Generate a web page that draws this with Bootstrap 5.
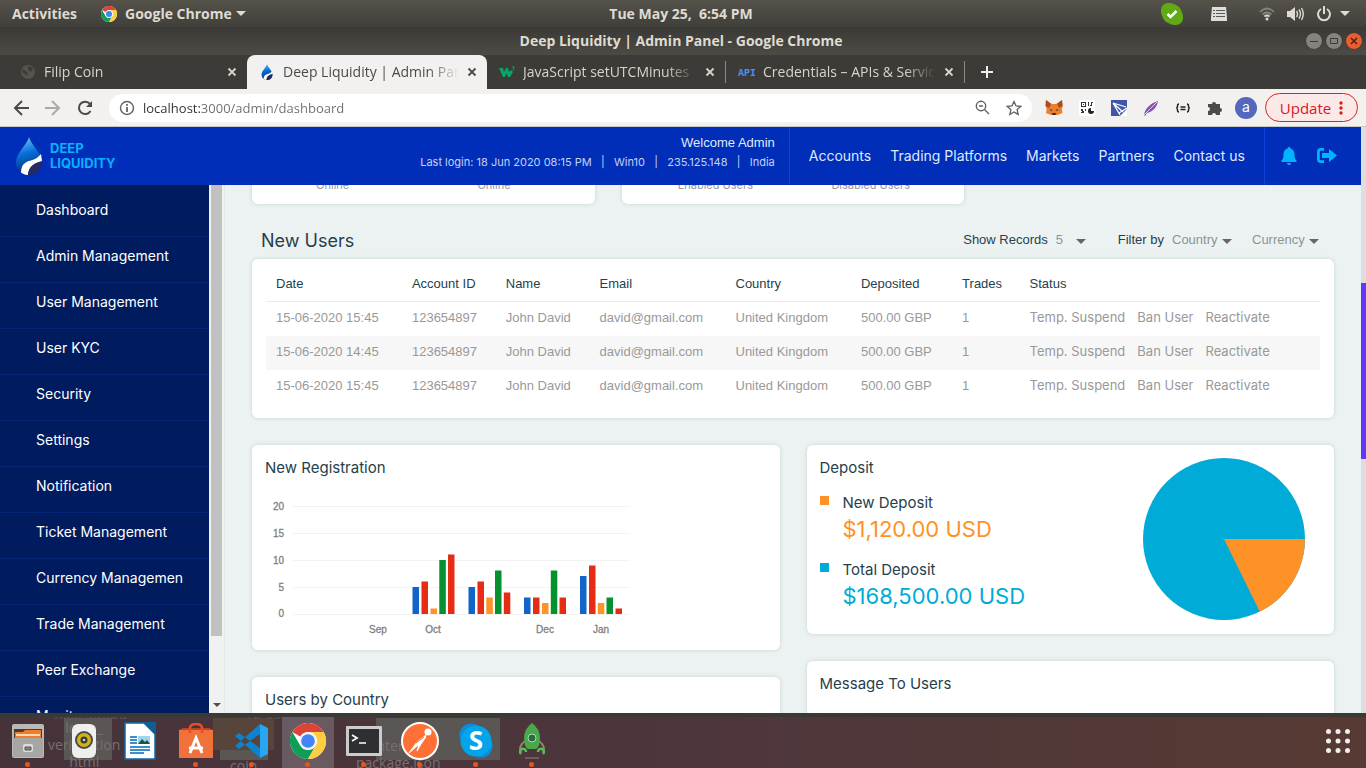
<!DOCTYPE html>
<html lang="en">
<head>
<meta charset="utf-8">
<meta name="viewport" content="width=device-width, initial-scale=1">
<title>Deep Liquidity | Admin Panel</title>
<link href="https://cdn.jsdelivr.net/npm/bootstrap@5.3.0/dist/css/bootstrap.min.css" rel="stylesheet">
<style>
:root{--ui:"Open Sans","Noto Sans",sans-serif;--geo:Inter,"Open Sans",sans-serif;--arial:"Liberation Sans",Arial,sans-serif;--ink:#263f4c}
body{height:100vh;overflow:hidden;font-family:var(--geo);font-size:14px;line-height:20px;background:#3c3b37}
button{background:none;border:0;padding:0;color:inherit;font:inherit}
a{color:inherit;text-decoration:none}
svg{display:block;flex:none}
/* system bar and window frame */
.sysbar,.frame-title,.tabstrip,.toolbar,.site{flex-shrink:0}
.sysbar{height:27px;padding:0 16px 0 12px;background:linear-gradient(#55524a,#403f3a);color:#dfdbd2;font:700 14px/27px var(--ui)}
.frame-title{height:28px;background:linear-gradient(#3a3935,#4c4b45);color:#dfdbd2;font:700 14px/27px var(--ui)}
.side{flex:1 1 0}
.winbtn{width:16px;height:16px;border-radius:50%;background:#85837d;box-shadow:0 0 1px #222}
.winbtn.quit{background:#ea5d2f}
.tabstrip{height:34px;background:#3d3b37;color:#d8d4cc;font:14px/34px var(--ui)}
.btab{flex:0 1 239px;min-width:0;padding:0 10px 0 12px;gap:8px}
.btab.cur{flex-basis:240px;background:#f2f1f0;color:#4a4a4a;border-radius:8px 8px 0 0}
.btab .cap{flex:1;overflow:hidden;white-space:nowrap;-webkit-mask-image:linear-gradient(90deg,#000 82%,transparent)}
.btab.split{border-right:1px solid #6e6c66;border-image:linear-gradient(transparent 20%,#8b8981 20% 80%,transparent 80%) 1}
.toolbar{height:38px;background:#f2f1f0;border-bottom:1px solid #c9c8c6;padding:0 8px 0 13px}
.omni{height:28px;border-radius:14px;background:#fff;padding:0 10px;margin-right:13px}
.omni input{flex:1;border:0;outline:0;min-width:0;padding:0;font:13px/20px var(--ui);color:transparent;background:linear-gradient(90deg,#303030 57px,#6d6d6d 57px);-webkit-background-clip:text;background-clip:text}
.avatar-a{width:22px;height:22px;border-radius:50%;background:#5468bd;color:#fff;line-height:20px;margin:0 8px 0 12px}
.update{width:93px;height:29px;border:1px solid #d22;border-radius:15px;background:#fce8e6;color:#d3201f;font:15px/26px var(--ui)}
/* site header */
.site{height:58px;background:#002eb9;color:#dfeaff}
.brand-name{color:#0bb0ff;font:700 13px/15px Inter,sans-serif}
.login{padding:0 14px 8px 0}
.login-info{font-size:11px;line-height:18px;color:#c3d2f4}
.welcome{font:13px/20px var(--arial)}
.site .cell{border-left:1px solid #0b42d5;height:58px}
.topnav{gap:19px;padding:0 19px}
/* sidebar */
.sidebar{width:209px;background:#001c5f;color:#fff;overflow:hidden;padding-top:6px}
.sidebar a{display:block;height:46px;padding:9px 0 0 36px;border-bottom:1px solid #052577;white-space:nowrap}
.sbar{width:16px;background:#f1f1f1;border-right:1px solid #e3e6e6}
.sbar i{display:block;width:11px;height:451px;margin-left:2px;background:#c1c1c1}
.pagebar{width:5px;background:#dedede}
.pagebar i{display:block;height:176px;margin-top:156px;background:#6238f8}
/* content */
.content{background:#ecf2f2;overflow:hidden;min-width:0;padding:0 27px;color:var(--ink)}
.panel{background:#fff;border-radius:6px;box-shadow:0 0 4px rgba(40,70,70,.18)}
.grid3{display:grid;grid-template-columns:repeat(3,1fr);gap:27px}
.grid2{display:grid;grid-template-columns:1fr 1fr;gap:27px;margin-top:27px}
.stats{margin-top:-10px}
.stat{height:29px;font-size:11px;color:#999}
.stat.first{padding-right:20px}
.section-head{margin:25px 15px 6px 9px}
.h-sec{font-size:18px;line-height:24px;font-weight:400;margin:0}
.h-card{font-size:15px;line-height:20px;font-weight:400;margin:0}
.filters{font:13px/18px var(--arial);padding-bottom:2px}
.filters select{appearance:none;border:0;outline:0;padding:0;background:none;color:#8a9297;font:inherit}
.caret{width:0;border:5px solid transparent;border-top-color:#666;border-bottom:0;margin-top:3px}
.gap-filter{margin-right:28px}
.users-panel{padding:14px}
.users{table-layout:fixed;width:100%;font:13px/17px var(--arial);color:#999}
.users th{font-weight:400;color:var(--ink);padding:2px 0 9px 10px;border-bottom:1px solid #e9ecec}
.users td{height:34px;padding:0 0 2px 10px;vertical-align:middle}
.users tbody tr:nth-child(even){background:#f7f7f7}
.users button{font:13px/17px var(--geo);margin-right:12px}
.stack{gap:27px}
.card-pad{padding:13px}
.chart{margin-top:12px}
.dep{gap:14px;margin-top:15px}
.sq{width:9px;height:9px;margin-top:3px;flex:none}
.amount{font-size:22px;line-height:32px}
.pie{margin-bottom:1px}
.tall{min-height:140px}
/* dock */
.dock{height:55px;border-top:4px solid #3a3935;background:linear-gradient(90deg,#46333a,#4f373a 60%,#573a33)}
.dock button{width:56px;height:51px;padding-bottom:3px;position:relative;z-index:1}
.dock button svg{margin:auto}
.dock .on::after{content:"";position:absolute;left:25px;bottom:1px;width:5px;height:5px;border-radius:50%;background:#e95420}
.dock .active{background:linear-gradient(90deg,transparent 2px,#695960 2px 54px,transparent 54px)}
.ghost{position:absolute;font:14px/17px var(--ui);color:#77706f;text-align:center;white-space:pre}
.ghost.dim{line-height:12px;color:#5d5453}
.ghostbox{position:absolute;background:#5a5653}
</style>
</head>
<body class="d-flex flex-column">
<svg width="0" height="0" class="position-absolute">
<defs>
<linearGradient id="gd" x1="0.400" y1="0" x2=".6" y2="1"><stop offset="0" stop-color="#6cc0f8"/><stop offset=".4" stop-color="#0870d8"/><stop offset="1" stop-color="#06256e"/></linearGradient>
<symbol id="chrome" viewBox="0 0 36 36"><circle cx="18" cy="18" r="18" fill="#fff"/><path d="M2.400 9A18 18 0 0 1 33.600 9H18a9 9 0 0 0-7.800 4.500z" fill="#db4437"/><path d="M2.400 9A18 18 0 0 0 18 36l7.800-13.500a9 9 0 0 1-15.600 0z" fill="#0f9d58"/><path d="M33.600 9A18 18 0 0 1 18 36l7.800-13.500A9 9 0 0 0 18 9z" fill="#ffcd40"/><circle cx="18" cy="18" r="8.500" fill="#f1f1f1"/><circle cx="18" cy="18" r="6.800" fill="#4285f4"/></symbol>
<symbol id="drop" viewBox="0 0 26 38"><path d="M13 0C15 8 26 16 26 25.500A13 12.500 0 0 1 0 25.500C0 16 11 8 13 0z" fill="url(#gd)"/><path d="M5 35.500C5.500 27 9 25 15 23.500 20 22 23 19.500 25 17l1 7C19 26 12.500 29 12 38c-3-.2-5-1-7-2.500z" fill="#fff"/><path d="M26 24.500C19 25.500 12.500 29 12 38 20 38.500 26 33 26 24.500z" fill="#252a62"/></symbol>
<symbol id="x" viewBox="0 0 10 10"><path d="M1.500 1.500l7 7m0-7l-7 7" stroke="currentColor" stroke-width="1.800"/></symbol>
</defs>
</svg>

<header class="sysbar d-flex">
<div class="side d-flex align-items-center"><button>Activities</button><button class="d-flex align-items-center ms-3 gap-1"><svg class="ms-2 me-1" width="16" height="16"><use href="#chrome"/></svg>Google Chrome<svg width="10" height="6"><path d="M0 0h10L5 5z" fill="currentColor"/></svg></button></div>
<time>Tue May 25,&nbsp; 6:54 PM</time>
<div class="side d-flex align-items-center justify-content-end">
<svg width="22" height="22" viewBox="0 0 22 22" class="me-4"><rect width="16" height="16" rx="7" fill="#62a916"/><rect x="6" y="6" width="16" height="16" rx="7" fill="#62a916"/><circle cx="11" cy="11" r="10" fill="#62a916"/><path d="M6.500 11l3 3 6-6" fill="none" stroke="#fff" stroke-width="2.500"/></svg>
<svg width="16" height="14" viewBox="0 0 16 14" class="ms-1 me-4"><path d="M1 0h14l1 11v3H0v-3z" fill="#dedede"/><path d="M2 3.500h2m1 0h9M2 6.500h2m1 0h9M2 9.500h2m1 0h9" stroke="#5a5a55"/></svg>
<svg width="16" height="14" viewBox="0 0 16 14" class="ms-2 me-2" fill="none" stroke-width="1.700"><path d="M1 5Q8-2 15 5M3.500 7.500q4.500-4 9 0" stroke="#85827b"/><path d="M5.500 9.500q2.500-2 5 0" stroke="#dfdbd2"/><circle cx="8" cy="12" r="1.500" fill="#dfdbd2"/></svg>
<svg width="17" height="14" viewBox="0 0 17 14" class="ms-1 me-2"><path d="M0 4h3l5-4v14L3 10H0z" fill="#dfdbd2"/><path d="M9.500 4q2 3 0 6M12 2.500q3 4.500 0 9M14.500 1q3.500 6 0 12" fill="none" stroke="#dfdbd2" stroke-width="1.400"/></svg>
<svg width="16" height="16" viewBox="0 0 16 16" class="ms-1 me-2"><path d="M5 3a6 6 0 1 0 6 0M8 0v8" fill="none" stroke="#dfdbd2" stroke-width="2"/></svg>
<svg width="10" height="6"><path d="M0 0h10L5 5z" fill="#dfdbd2"/></svg>
</div>
</header>

<div class="frame-title d-flex">
<div class="side"></div><div>Deep Liquidity | Admin Panel - Google Chrome</div>
<div class="side d-flex justify-content-end align-items-center gap-1 pe-1">
<button class="winbtn" aria-label="Minimise"><svg width="16" height="16"><path d="M4 8.500h8" stroke="#3c3b37"/></svg></button>
<button class="winbtn" aria-label="Maximise"><svg width="16" height="16"><path d="M4.500 5.500h7v5h-7z" fill="none" stroke="#3c3b37"/></svg></button>
<button class="winbtn quit" aria-label="Close"><svg width="16" height="16"><path d="M5 5l6 6m0-6l-6 6" stroke="#4b2416" stroke-width="1.500"/></svg></button>
</div>
</div>

<nav class="tabstrip d-flex ps-2">
<a href="#" class="btab d-flex align-items-center"><svg width="16" height="16" viewBox="0 0 16 16"><circle cx="8" cy="8" r="7" fill="#55544f"/><path d="M3 5l4 3 1 4-3-2-3-2zM8 2l5 2-2 4-3-2z" fill="#3d3b37"/></svg><span class="cap">Filip Coin</span><svg width="10" height="10"><use href="#x"/></svg></a>
<a href="#" class="btab cur d-flex align-items-center"><svg width="16" height="16"><use href="#drop"/></svg><span class="cap">Deep Liquidity | Admin Panel</span><svg width="10" height="10"><use href="#x"/></svg></a>
<a href="#" class="btab split d-flex align-items-center"><svg width="16" height="12" viewBox="0 0 16 12"><path d="M0 2h4l1 4 2-4h2l1 4 2-2 2 2-3 5H9L7.500 7 6 11H4z" fill="#04a66b"/><path d="M13 1h2.500l-1.500 1.500q2 .5 0 2" fill="none" stroke="#04a66b"/></svg><span class="cap">JavaScript setUTCMinutes</span><svg width="10" height="10"><use href="#x"/></svg></a>
<a href="#" class="btab split d-flex align-items-center"><svg width="17" height="12"><text y="10" font-family="Liberation Mono" font-weight="700" font-size="10" fill="#4d8ef5">API</text></svg><span class="cap">Credentials – APIs &amp; Services</span><svg width="10" height="10"><use href="#x"/></svg></a>
<button class="ms-3" aria-label="New tab"><svg width="12" height="12"><path d="M6 0v12M0 6h12" stroke="#eee" stroke-width="2"/></svg></button>
</nav>

<div class="toolbar d-flex align-items-center">
<button aria-label="Back"><svg width="16" height="16" fill="none" stroke="#4a4a4a" stroke-width="2"><path d="M16 8H2m7-7L2 8l7 7"/></svg></button>
<button class="ms-3" aria-label="Forward"><svg width="16" height="16" fill="none" stroke="#aaa" stroke-width="2"><path d="M0 8h14M7 1l7 7-7 7"/></svg></button>
<button class="ms-3 me-3" aria-label="Reload"><svg width="16" height="16" fill="none" stroke="#4a4a4a" stroke-width="2"><path d="M13.500 11A6.200 6.200 0 1 1 13 4"/><path d="M15 1v6H9z" fill="#4a4a4a" stroke="none"/></svg></button>
<div class="omni d-flex align-items-center flex-fill gap-2">
<svg width="16" height="16" fill="none" stroke="#5f6368" stroke-width="1.400"><circle cx="8" cy="8" r="6.500"/><path d="M8 7v5M8 4v1.800" stroke-width="1.800"/></svg>
<input type="text" aria-label="Address" value="localhost:3000/admin/dashboard">
<svg width="15" height="15" class="me-2" fill="none" stroke="#606060" stroke-width="1.400"><circle cx="6" cy="6" r="4.700"/><path d="M9.500 9.500l4.500 4.500M4 6h4"/></svg>
<svg width="16" height="16" fill="none" stroke="#606060" stroke-width="1.300"><path d="M8 1.500l2 4.500 4.800.4-3.700 3.200 1.100 4.900L8 12l-4.200 2.500 1.100-4.900L1.200 6.400 6 6z"/></svg>
</div>
<div class="d-flex align-items-center gap-3">
<svg width="18" height="16" viewBox="0 0 18 16"><path d="M1 0l6 4h4l6-4 .8 6-1 3 .7 4-5 2H6l-5-2 .7-4-1-3z" fill="#e8802f"/><path d="M1 0l5 4-2 4-3.500-2zM17 0l-5 4 2 4 3.500-2z" fill="#a94c20"/><path d="M4.500 9l3 1-1.500 1zM13.500 9l-3 1 1.500 1zM7 13h4l-.5 2h-3z" fill="#3c2a25"/></svg>
<svg width="16" height="16"><rect width="16" height="16" rx="1" fill="#fff"/><path d="M2 2h5v5H2zM9 2h1v4H9zM12 2h2v1h-1v3h-2V5h1zM2 9h2v2h2V9h1v2H5v2H2v-1h1v-1H2z" fill="#333"/><path d="M3 3h3v3H3z" fill="#fff"/><path d="M4 4h1v1H4z" fill="#333"/><path d="M12 8v3h3a3 3 0 1 1-3-3z" fill="#222"/></svg>
<svg width="16" height="16"><path d="M0 0h16v16H0z" fill="#4255ae"/><path d="M2 3l13 4M2 3l7 12M2 3l10 9M16 8L8 13" stroke="#fff" stroke-width="1.300"/><path d="M16 9v7H9z" fill="#fff"/></svg>
<svg width="16" height="16"><path d="M1 15C2 8 8 3 15 1c-1 7-6 11-11 12l-2 3z" fill="#8652b4"/><path d="M1 15L14 2" stroke="#e1c9f1"/></svg>
<svg width="16" height="16" fill="none" stroke="#222" stroke-width="1.500"><path d="M4 4Q2.500 4 2.500 6T1.200 8Q2.500 8 2.500 10T4 12M12 4q1.500 0 1.500 2t1.300 2q-1.300 0-1.300 2T12 12M5.500 7h5M5.500 9.500h5"/></svg>
<svg width="16" height="16"><path d="M1 4h4a2 2 0 1 1 4 0h4v4a2 2 0 1 1 0 4v3H9a2 2 0 1 0-4 0H1v-4a2 2 0 0 0 0-4z" fill="#4b4b4b"/></svg>
</div>
<div class="avatar-a text-center">a</div>
<button class="update d-flex align-items-center justify-content-center gap-2">Update <svg width="4" height="14" fill="#d3201f"><circle cx="2" cy="2" r="1.700"/><circle cx="2" cy="7" r="1.700"/><circle cx="2" cy="12" r="1.700"/></svg></button>
</div>

<div class="d-flex flex-fill overflow-hidden">
<div class="d-flex flex-column flex-fill overflow-hidden">
<header class="site d-flex align-items-center">
<a href="#" class="d-flex align-items-center gap-2 ps-3 me-auto"><svg width="26" height="38"><use href="#drop"/></svg><span class="brand-name">DEEP<br>LIQUIDITY</span></a>
<div class="login text-end"><div class="welcome">Welcome Admin</div><div class="login-info">Last login: 18 Jun 2020 08:15 PM &nbsp; | &nbsp; Win10 &nbsp; | &nbsp; 235.125.148 &nbsp; | &nbsp; India</div></div>
<nav class="cell topnav d-flex align-items-center"><a href="#">Accounts</a><a href="#">Trading Platforms</a><a href="#">Markets</a><a href="#">Partners</a><a href="#">Contact us</a></nav>
<div class="cell d-flex align-items-center gap-3 px-3 pe-4">
<button aria-label="Notifications"><svg width="16" height="18" fill="#00b4ff"><path d="M8 0a1.300 1.300 0 0 1 1.300 1.500C12.500 2.200 13.500 5 13.500 8c0 3.500 1 4.500 2 5.500V15H.5v-1.500C1.500 12.500 2.500 11.500 2.500 8c0-3 1-5.800 4.200-6.500A1.300 1.300 0 0 1 8 0zM6 16h4a2 2 0 0 1-4 0z"/></svg></button>
<button class="ms-1" aria-label="Log out"><svg width="20" height="16" fill="#00b4ff"><path d="M7 0H4a4 4 0 0 0-4 4v7a4 4 0 0 0 4 4h3v-2.800H4A1.200 1.200 0 0 1 2.800 11V4A1.200 1.200 0 0 1 4 2.800h3zM12 1l8 6.500-8 6.500v-4H5V5h7z"/></svg></button>
</div>
</header>

<div class="d-flex flex-fill overflow-hidden">
<nav class="sidebar flex-shrink-0"><a href="#">Dashboard</a><a href="#">Admin Management</a><a href="#">User Management</a><a href="#">User KYC</a><a href="#">Security</a><a href="#">Settings</a><a href="#">Notification</a><a href="#">Ticket Management</a><a href="#">Currency Managemen</a><a href="#">Trade Management</a><a href="#">Peer Exchange</a><a href="#">Monitor</a></nav>
<div class="sbar flex-shrink-0 d-flex flex-column justify-content-between"><i></i><svg width="15" height="16"><path d="M4 6h8l-4 4z" fill="#505050"/></svg></div>

<main class="content flex-fill">
<div class="grid3 stats">
<div class="panel stat first d-flex"><div class="col text-center">Online</div><div class="col text-center">Online</div></div>
<div class="panel stat d-flex px-3"><div class="col text-center">Enabled Users</div><div class="col text-center">Disabled Users</div></div>
</div>

<div class="section-head d-flex align-items-center justify-content-between">
<h1 class="h-sec">New Users</h1>
<form class="filters d-flex align-items-center">
<label for="rec" class="me-2">Show Records</label><select id="rec" class="me-2"><option>5</option></select><span class="caret ms-1 gap-filter"></span>
<label for="cty" class="ms-1 me-2">Filter by</label><select id="cty"><option>Country</option></select><span class="caret ms-1 me-3"></span>
<select id="cur" class="ms-1" aria-label="Currency"><option>Currency</option></select><span class="caret ms-1"></span>
</form>
</div>

<section class="panel users-panel">
<table class="users">
<colgroup><col style="width:12.900%"><col style="width:8.900%"><col style="width:8.900%"><col style="width:12.900%"><col style="width:11.900%"><col style="width:9.600%"><col style="width:6.400%"><col></colgroup>
<thead><tr><th>Date</th><th>Account ID</th><th>Name</th><th>Email</th><th>Country</th><th>Deposited</th><th>Trades</th><th>Status</th></tr></thead>
<tbody>
<tr><td>15-06-2020 15:45</td><td>123654897</td><td>John David</td><td>david@gmail.com</td><td>United Kingdom</td><td>500.00 GBP</td><td>1</td><td><button>Temp. Suspend</button><button>Ban User</button><button>Reactivate</button></td></tr>
<tr><td>15-06-2020 14:45</td><td>123654897</td><td>John David</td><td>david@gmail.com</td><td>United Kingdom</td><td>500.00 GBP</td><td>1</td><td><button>Temp. Suspend</button><button>Ban User</button><button>Reactivate</button></td></tr>
<tr><td>15-06-2020 15:45</td><td>123654897</td><td>John David</td><td>david@gmail.com</td><td>United Kingdom</td><td>500.00 GBP</td><td>1</td><td><button>Temp. Suspend</button><button>Ban User</button><button>Reactivate</button></td></tr>
</tbody>
</table>
</section>

<div class="grid2">
<div class="d-flex flex-column stack">
<section class="panel card-pad">
<h2 class="h-card">New Registration</h2>
<svg class="chart" width="370" height="147" viewBox="0 0 370 147" role="img" aria-label="Registrations per month">
<path d="M28 16.500h337M28 43.500h337M28 70.500h337M28 97.500h337M28 124.500h337" stroke="#f3f3f3"/>
<g font-family="Liberation Sans" font-size="10" fill="#808080" stroke="#808080" stroke-width=".3"><g text-anchor="end"><text x="19" y="20">20</text><text x="19" y="47">15</text><text x="19" y="74">10</text><text x="19" y="101">5</text><text x="19" y="127">0</text></g><g text-anchor="middle"><text x="113" y="143">Sep</text><text x="168" y="143">Oct</text><text x="280" y="143">Dec</text><text x="336" y="143">Jan</text></g></g>
<path fill="#1265c8" d="M147.500 97h6.500v27h-6.500zM203.500 97h6.500v27h-6.500zM259 107.500h6.500v16.500h-6.500zM315 86h6.500v38h-6.500z"/>
<path fill="#e62d14" d="M156.500 91.500h6.500v32.500h-6.500zM183 64.500h6.500v59.500h-6.500zM212.500 91.500h6.500v32.500h-6.500zM238.800 102.500h6.500v21.500h-6.500zM268 107.500h6.500v16.500h-6.500zM294.500 107.500h6.500v16.500h-6.500zM324 75.500h6.500v48.500h-6.500zM350.500 118.500h6.500v5.500h-6.500z"/>
<path fill="#fe9427" d="M165.500 118.500h6.500v5.500h-6.500zM221.300 107.500h6.500v16.500h-6.500zM277 113h6.500v11h-6.500zM332.800 113h6.500v11h-6.500z"/>
<path fill="#05922e" d="M174.300 70h6.500v54h-6.500zM230 80.500h6.500v43.500h-6.500zM285.800 80.500h6.500v43.500h-6.500zM341.500 107.500h6.500v16.500h-6.500z"/>
</svg>
</section>
<section class="panel card-pad tall"><h2 class="h-card">Users by Country</h2></section>
</div>
<div class="d-flex flex-column stack">
<section class="panel card-pad d-flex justify-content-between">
<div><h2 class="h-card">Deposit</h2>
<div class="d-flex dep"><span class="sq" style="background:#ff9226"></span><div><div class="h-card">New Deposit</div><div class="amount" style="color:#ff9226">$1,120.00 USD</div></div></div>
<div class="d-flex dep"><span class="sq" style="background:#00abd8"></span><div><div class="h-card">Total Deposit</div><div class="amount" style="color:#00abd8">$168,500.00 USD</div></div></div>
</div>
<svg class="pie me-3" width="162" height="162" viewBox="-81 -81 162 162" role="img" aria-label="Deposit share"><circle r="81" fill="#00abd8"/><path d="M0 0H81A81 81 0 0 1 35.800 72.700z" fill="#ff9226"/></svg>
</section>
<section class="panel card-pad tall"><h2 class="h-card">Message To Users</h2></section>
</div>
</div>
</main>
</div>
</div>
<div class="pagebar flex-shrink-0"><i></i></div>
</div>

<footer class="dock d-flex align-items-center position-relative overflow-hidden flex-shrink-0">
<span class="ghostbox" style="left:64px;top:1px;width:48px;height:42px"></span><span class="ghostbox" style="left:213px;top:1px;width:61px;height:32px;background:#57443a"></span><span class="ghostbox" style="left:220px;top:33px;width:48px;height:10px"></span><span class="ghostbox" style="left:376px;top:1px;width:124px;height:42px"></span>
<span class="ghost dim" style="left:54px;top:-9px">Raja Subbu</span><span class="ghost dim" style="left:245px;top:-9px">18-05-2021</span><span class="ghost" style="left:48px;top:2px">login_
verification
html</span><span class="ghost" style="left:230px;top:40px">coin</span><span class="ghost" style="left:356px;top:20px">internal
package.json</span>
<button class="on" aria-label="Files"><svg width="34" height="36"><rect x="1" y="1" width="32" height="34" rx="2" fill="#b9b9b7"/><path d="M3 6h28v9H3z" fill="#5a3526"/><path d="M4 9h8l2-2h16v8H4z" fill="#ee7b32"/><path d="M5 12h24" stroke="#ffd9a8" stroke-width="2"/><path d="M2 15h30v19H2z" fill="#a6a6a4"/><rect x="12" y="21" width="10" height="8" rx="2" fill="#ddd"/><path d="M14 24h6v3h-6z" fill="#888" stroke="#555"/></svg></button>
<button aria-label="Rhythmbox"><svg width="26" height="36"><rect x="1" y="1" width="24" height="34" rx="6" fill="#efefee"/><circle cx="13" cy="17" r="9" fill="#4b4b48"/><circle cx="13" cy="17" r="7" fill="#d1b516"/><circle cx="13" cy="17" r="3.500" fill="#3c3c3a"/><circle cx="13" cy="17" r="1.300" fill="#ccc"/></svg></button>
<button aria-label="Writer"><svg width="32" height="38"><path d="M1 1h19l11 11v25H1z" fill="#fff" stroke="#0d6ba8" stroke-width="1.500"/><path d="M20 0h12v12z" fill="#0b5e97"/><path d="M6 15h7M6 18h7M6 21h7M6 25h20M6 28h20M6 31h14" stroke="#3a91c9" stroke-width="1.800"/><path d="M14 14h12v8H14z" fill="#9bd7f2"/><path d="M14 22l4-5 3 3 2-2 3 4z" fill="#24513b"/></svg></button>
<button class="on" aria-label="Software"><svg width="36" height="36"><path d="M1 7h34v28H1z" fill="#f0713a"/><path d="M1 7l4-2h26l4 2z" fill="#ba4520"/><path d="M12 10V5q0-4 6-4t6 4v5" fill="none" stroke="#e2502b" stroke-width="2.500"/><path d="M12 30l6-15 6 15M11 25h14" fill="none" stroke="#fff" stroke-width="3"/></svg></button>
<button class="on" aria-label="Code"><svg width="36" height="36"><path d="M26 1l8 4v26l-8 4z" fill="#29a5f2"/><path d="M26 1v10L5 26l-4-3zM26 35V25L5 10l-4 3z" fill="#0d82cf"/></svg></button>
<button class="on active" aria-label="Chrome"><svg width="36" height="36"><use href="#chrome"/></svg></button>
<button class="on" aria-label="Terminal"><svg width="36" height="30"><rect width="36" height="30" rx="1" fill="#ccc"/><rect x="3" y="3" width="30" height="24" fill="#2d2f30"/><path d="M6 9l5 3-5 3M13 17h7" fill="none" stroke="#fff" stroke-width="1.700"/></svg></button>
<button class="on" aria-label="Postman"><svg width="38" height="38"><circle cx="19" cy="19" r="18" fill="#ff7036" stroke="#fff" stroke-width="2"/><circle cx="27" cy="10" r="3.500" fill="#fff"/><path d="M25 13l-9 7-8 11 8-7 2-1-2 6 4-7 5-7" fill="#fff" stroke="#fff"/><path d="M15 21l8-6" stroke="#ff7036"/></svg></button>
<button class="on" aria-label="Skype"><svg width="34" height="36"><circle cx="12" cy="12" r="11.500" fill="#0b8dd8"/><circle cx="22" cy="23" r="11.500" fill="#0b8dd8"/><circle cx="17" cy="18" r="15.500" fill="#04a4ec"/><text x="17" y="27" font-family="Open Sans" font-size="26" font-weight="700" fill="#fff" text-anchor="middle">S</text></svg></button>
<button class="on" aria-label="Rocket"><svg width="28" height="38"><path d="M3 31q-3-7 4-12M25 31q3-7-4-12" fill="none" stroke="#8d8466" stroke-width="2"/><path d="M14 1q8 6 8 15t-4 11h-8Q6 25 6 16T14 1z" fill="#4ba64c"/><circle cx="14" cy="16" r="4" fill="#286b3c" stroke="#a9dfb6"/><path d="M3 32a3 3 0 1 1 5-2M25 32a3 3 0 1 0-5-2" fill="none" stroke="#58bb59" stroke-width="2.500"/><path d="M7 36h14" stroke="#887"/></svg></button>
<button class="ms-auto" aria-label="Show applications"><svg width="24" height="24" fill="#f2f0ee"><circle cx="2.500" cy="2.500" r="2.500"/><circle cx="12" cy="2.500" r="2.500"/><circle cx="21.500" cy="2.500" r="2.500"/><circle cx="2.500" cy="12" r="2.500"/><circle cx="12" cy="12" r="2.500"/><circle cx="21.500" cy="12" r="2.500"/><circle cx="2.500" cy="21.500" r="2.500"/><circle cx="12" cy="21.500" r="2.500"/><circle cx="21.500" cy="21.500" r="2.500"/></svg></button>
</footer>
<script src="https://cdn.jsdelivr.net/npm/bootstrap@5.3.0/dist/js/bootstrap.bundle.min.js"></script>
</body>
</html>
